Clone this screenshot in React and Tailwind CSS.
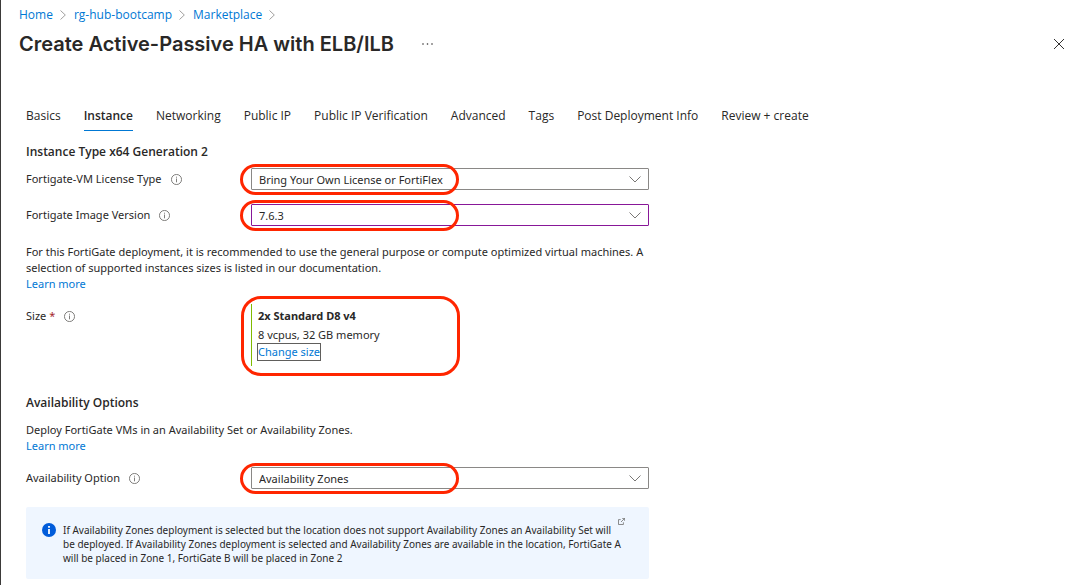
import React from "react";

function Crumb({ children }) {
  return (
    <li className="flex items-center gap-[7px]">
      <a href="#" className="text-[#0078d4] hover:underline">{children}</a>
      <svg className="h-2.5 w-1.5" viewBox="0 0 6 10" fill="none" stroke="#8a8886" strokeWidth=".8" aria-hidden="true">
        <path d="M.5 .5 5.3 5 .5 9.5" />
      </svg>
    </li>
  );
}

function InfoIcon() {
  return (
    <svg className="size-[11px] shrink-0" viewBox="0 0 11 11" fill="none" stroke="#605e5c" aria-hidden="true">
      <circle cx="5.5" cy="5.5" r="5.05" strokeWidth=".8" />
      <path d="M5.5 4.5v3.8M5.5 2.7v1" strokeWidth=".8" />
    </svg>
  );
}

function Highlight({ large = false }) {
  return (
    <span
      aria-hidden="true"
      className={
        large
          ? "pointer-events-none absolute -top-2 -left-[11px] h-20 w-[219px] rounded-[20px] border-3 border-[#ff2600]"
          : "pointer-events-none absolute -top-1 -left-[11px] h-[31px] w-[219px] rounded-full border-3 border-[#ff2600]"
      }
    />
  );
}

function SelectRow({ id, label, value, active = false }) {
  return (
    <div className="flex items-center">
      <div className="flex w-[225px] shrink-0 items-center gap-[9px]">
        <label htmlFor={id}>{label}</label>
        <InfoIcon />
      </div>
      <div className="relative min-w-0 flex-1">
        <select
          id={id}
          defaultValue={value}
          className={`block h-[22px] w-full appearance-none rounded-[1px] border bg-white pt-px pr-8 pl-[7px] outline-none ${
            active ? "border-[#881798]" : "border-[#8a8886]"
          }`}
        >
          <option>{value}</option>
        </select>
        <svg
          className="pointer-events-none absolute top-2 right-2 h-[7px] w-3"
          viewBox="0 0 12 7"
          fill="none"
          stroke="#797775"
          aria-hidden="true"
        >
          <path d="M.5 .5 6 6 11.5 .5" />
        </svg>
        <Highlight />
      </div>
    </div>
  );
}

const tabs = [
  "Basics",
  "Instance",
  "Networking",
  "Public IP",
  "Public IP Verification",
  "Advanced",
  "Tags",
  "Post Deployment Info",
  "Review + create",
];

export default function App() {
  return (
    <main className="min-h-screen border-l border-[#3b3a39] bg-white pb-1.5 font-['Noto_Sans',sans-serif] text-[11px] leading-4 text-[#292827]">
      <nav aria-label="Breadcrumb" className="pt-[7px] pl-[18px] font-['Open_Sans',sans-serif] text-xs">
        <ol className="flex gap-2">
          <Crumb>Home</Crumb>
          <Crumb>rg-hub-bootcamp</Crumb>
          <Crumb>Marketplace</Crumb>
        </ol>
      </nav>

      <header className="flex items-center pt-1.5 pr-[25px] pl-[18px]">
        <h1 className="font-['Inter',sans-serif] text-xl leading-[30px] font-semibold">
          Create Active-Passive HA with ELB/ILB
        </h1>
        <button type="button" aria-label="More options" className="ml-7">
          <svg className="h-1 w-[11px]" viewBox="0 0 11 4" fill="#323130" aria-hidden="true">
            <circle cx="1" cy="2" r=".8" />
            <circle cx="5.5" cy="2" r=".8" />
            <circle cx="10" cy="2" r=".8" />
          </svg>
        </button>
        <button type="button" aria-label="Close" className="ml-auto">
          <svg className="size-3" viewBox="0 0 12 12" fill="none" stroke="#323130" aria-hidden="true">
            <path d="m1 1 10 10M11 1 1 11" />
          </svg>
        </button>
      </header>

      <div role="tablist" className="mt-[47px] flex gap-[23px] pl-[25px] font-['Open_Sans',sans-serif] text-xs">
        {tabs.map((tab) => (
          <button
            key={tab}
            type="button"
            role="tab"
            aria-selected={tab === "Instance"}
            className={`border-b pt-0.5 pb-1.5 whitespace-nowrap ${
              tab === "Instance" ? "border-[#0078d4] font-semibold" : "border-transparent"
            }`}
          >
            {tab}
          </button>
        ))}
      </div>

      <form className="ml-[25px] max-w-[623px] pt-[13px]">
        <h2 className="font-['Open_Sans',sans-serif] text-xs leading-4 font-semibold">Instance Type x64 Generation 2</h2>
        <div className="mt-2 flex flex-col gap-3.5">
          <SelectRow id="license" label="Fortigate-VM License Type" value="Bring Your Own License or FortiFlex" />
          <SelectRow id="version" label="Fortigate Image Version" value="7.6.3" active />
        </div>

        <p className="mt-[18px]">
          For this FortiGate deployment, it is recommended to use the general purpose or compute optimized virtual
          machines. A selection of supported instances sizes is listed in our documentation.
        </p>
        <a href="#" className="text-[#0078d4]">Learn more</a>

        <div className="mt-3 flex items-start">
          <div className="flex w-[225px] shrink-0 items-center gap-[9px] pt-1">
            <span>
              Size <span className="text-[#a4262c]">*</span>
            </span>
            <InfoIcon />
          </div>
          <div className="relative flex h-[62px] flex-col items-start border-l border-[#7fba00] pt-1 pl-1.5">
            <strong className="font-bold">2x Standard D8 v4</strong>
            <span className="mt-[3px]">8 vcpus, 32 GB memory</span>
            <button type="button" className="-ml-px border border-[#605e5c] text-[#0078d4]">
              Change size
            </button>
            <Highlight large />
          </div>
        </div>

        <h2 className="mt-[29px] font-['Open_Sans',sans-serif] text-xs leading-4 font-semibold">Availability Options</h2>
        <p className="mt-[11px]">Deploy FortiGate VMs in an Availability Set or Availability Zones.</p>
        <a href="#" className="block w-fit text-[#0078d4]">Learn more</a>
        <div className="mt-[13px]">
          <SelectRow id="availability" label="Availability Option" value="Availability Zones" />
        </div>

        <div className="relative mt-[18px] flex gap-[7px] rounded-xs bg-[#eff6ff] pt-4 pr-[26px] pb-3.5 pl-4">
          <svg className="size-3.5 shrink-0" viewBox="0 0 14 14" aria-hidden="true">
            <circle cx="7" cy="7" r="7" fill="#015cda" />
            <path d="M6.1 6h1.8v5H6.1zM6.1 3h1.8v1.8H6.1z" fill="#fff" />
          </svg>
          <p className="text-[10px] leading-[14px]">
            If Availability Zones deployment is selected but the location does not support Availability Zones an
            Availability Set will be deployed. If Availability Zones deployment is selected and Availability Zones are
            available in the location, FortiGate A will be placed in Zone 1, FortiGate B will be placed in Zone 2
          </p>
          <a href="#" aria-label="Open in a new window" className="absolute top-[11px] right-6">
            <svg className="block size-[7px]" viewBox="0 0 7 7" fill="none" stroke="#605e5c" strokeWidth=".7" aria-hidden="true">
              <path d="M2.7 1.6H.5v4.9h4.9V4.3M4.2.4h2.4v2.4M6.5.5 3 4" />
            </svg>
          </a>
        </div>
      </form>
    </main>
  );
}
